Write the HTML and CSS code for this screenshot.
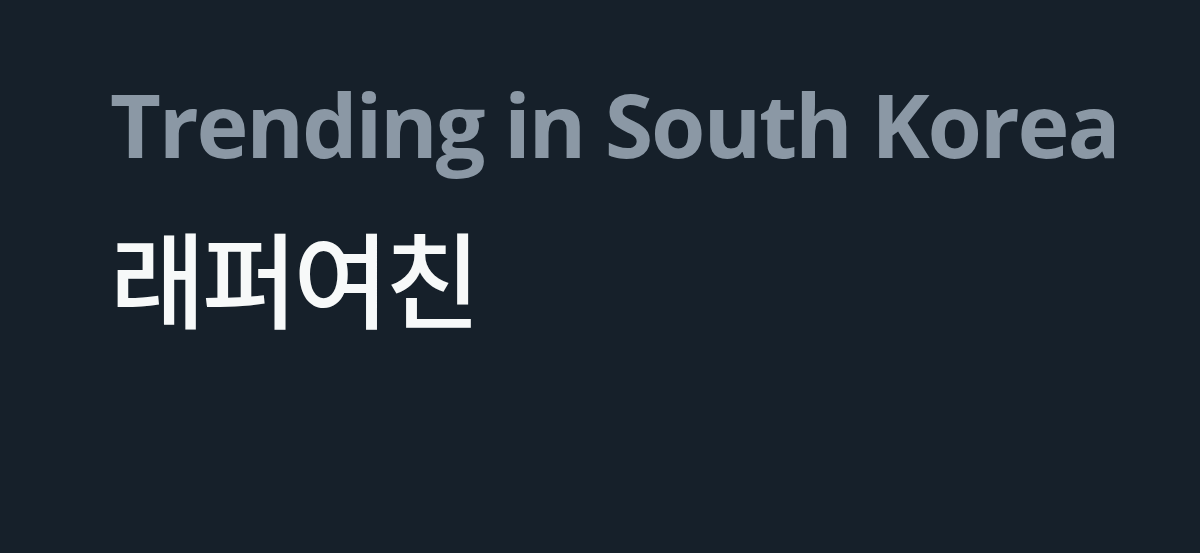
FILE: index.html
```html
<!DOCTYPE html>
<html lang="ko">
<head>
<meta charset="utf-8">
<link rel="stylesheet" href="styles.css">
</head>
<body>
<div class="trend">
  <div class="trend-meta">Trending in South Korea</div>
  <div class="trend-name">래퍼여친</div>
</div>
</body>
</html>
```
FILE: styles.css
```css
html, body {
  margin: 0;
  padding: 0;
  background: #16202a;
  width: 1200px;
  height: 553px;
  overflow: hidden;
}
.trend {
  padding: 69px 0 0 110px;
  display: flex;
  flex-direction: column;
}
.trend-meta {
  font-family: "Open Sans", "Noto Sans", sans-serif;
  font-weight: 700;
  font-size: 88px;
  line-height: 110px;
  color: #8b98a5;
  letter-spacing: -2.2px;
  white-space: nowrap;
}
.trend-name {
  font-family: "Noto Sans CJK KR", sans-serif;
  font-weight: 500;
  font-size: 104px;
  line-height: 120px;
  color: #f7f9f9;
  letter-spacing: -4px;
  margin-top: 37px;
}
```
